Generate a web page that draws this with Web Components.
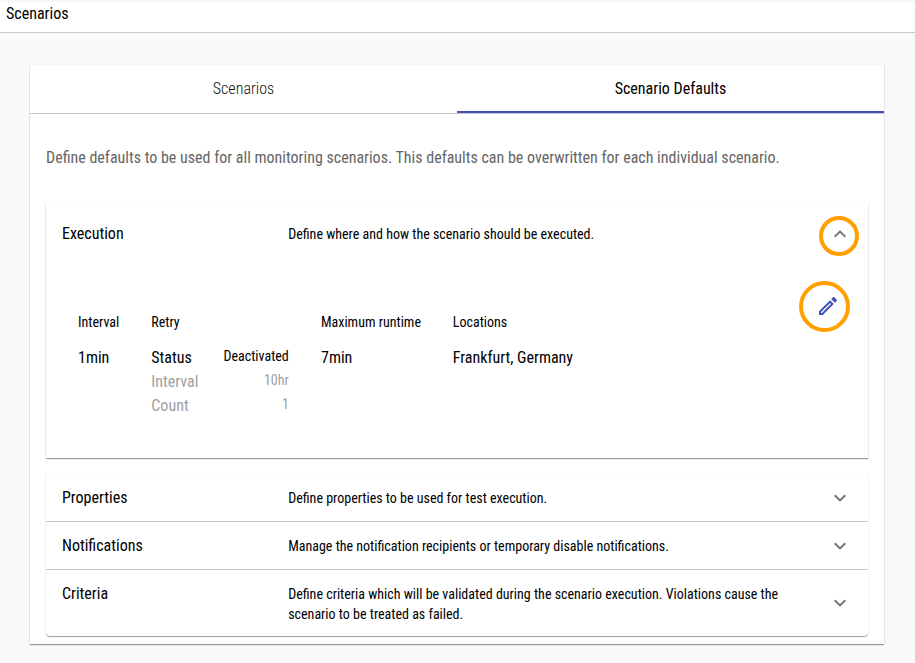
<!DOCTYPE html>
<html lang="en"><head><meta charset="utf-8"><title>Scenarios</title>
<style>
html,body{margin:0;height:100%}
body{background:#fafafa;color:#000;font:400 16px/24px "Roboto Condensed",Roboto,sans-serif;font-stretch:75%;overflow:hidden}
</style></head><body>
<scenario-page></scenario-page>
<script>
const define=(name,html)=>customElements.define(name,class extends HTMLElement{
  constructor(){super();this.attachShadow({mode:'open'}).innerHTML=html;}
});

define('text-line',`<style>
:host{display:block;white-space:nowrap}
</style><slot></slot>`);

define('page-header',`<style>
:host{display:block;box-sizing:border-box;height:33px;padding:2px 6px 0;background:linear-gradient(#f3f3f3,#fff 3px);border-bottom:1px solid #c8c8c8;color:#000}
</style><slot></slot>`);

define('tab-bar',`<style>
:host{display:flex;box-sizing:border-box;height:49px;border-bottom:1px solid #c9c9c9}
</style><slot></slot>`);

define('tab-item',`<style>
:host{flex:1;display:flex;align-items:center;justify-content:center;box-sizing:border-box;padding-top:2px;border-bottom:2px solid transparent;font-weight:300;color:#111}
:host([active]){border-color:#3f51b5;font-weight:400;color:#000}
</style><slot></slot>`);

define('chevron-icon',`<style>
:host{display:block;width:12px;height:8px}
:host([up]){transform:scaleY(-1)}
svg{display:block}
</style><svg width="12" height="8" viewBox="0 0 12 8"><path d="M.7 1.2 6 6.4 11.3 1.2" fill="none" stroke="#757575" stroke-width="2"/></svg>`);

define('highlight-ring',`<style>
:host{position:absolute;box-sizing:border-box;border:4px solid #ffa000;border-radius:50%}
</style>`);

define('expansion-panel',`<style>
:host{display:block;box-sizing:border-box;position:relative;background:#fff;color:#000}
header{display:grid;grid-template-columns:226.2px 1fr 12px;padding:12px 22px 0 16px;height:var(--head,36px)}
.desc{font-size:14px;line-height:20px;padding-top:2px}
.arrow{align-self:start;padding-top:var(--arrow,8px)}
</style><header><div><slot name="title"></slot></div><div class="desc"><slot name="desc"></slot></div>
<div class="arrow"><slot name="arrow"></slot></div></header><slot></slot>`);

define('panel-group',`<style>
:host{display:block;border-radius:0 0 4px 4px;box-shadow:0 1px 1px rgba(0,0,0,.38),0 0 2px rgba(0,0,0,.06);background:#fff}
</style><slot></slot>`);

define('execution-details',`<style>
:host{display:flex;padding:58px 32px 0;color:#000}
section{flex:none}
h4{margin:0 0 14px;font-size:14px;font-weight:400;line-height:20px}
dl{display:grid;grid-template-columns:1fr auto;margin:0}
dt,dd{margin:0;height:24px}
dd{font-size:14px;line-height:20px;box-sizing:border-box;justify-self:end}
.off{color:#a0a0a0}
</style>
<section style="width:73.3px"><h4><text-line>Interval</text-line></h4><text-line>1min</text-line></section>
<section style="width:137.5px;margin-right:32.2px"><h4><text-line>Retry</text-line></h4>
<dl><dt><text-line>Status</text-line></dt><dd><text-line>Deactivated</text-line></dd>
<dt class="off"><text-line>Interval</text-line></dt><dd class="off"><text-line>10hr</text-line></dd>
<dt class="off"><text-line>Count</text-line></dt><dd class="off"><text-line>1</text-line></dd></dl></section>
<section style="width:131.8px"><h4><text-line>Maximum runtime</text-line></h4><text-line>7min</text-line></section>
<section><h4><text-line>Locations</text-line></h4><text-line>Frankfurt, Germany</text-line></section>`);

define('scenario-page',`<style>
:host{display:block}
main{display:block;margin:32px 31px 0 30px;height:579px;background:#fff;box-shadow:0 1px 1px rgba(0,0,0,.4),0 0 2px rgba(0,0,0,.07)}
.content{padding:32px 16px 0}
.intro{color:#666;margin-bottom:32px}
.first{height:256px;margin-bottom:16px;border-radius:0}
.line{border-top:1px solid #c9c9c9}
.pencil{position:absolute;left:770px;top:92px}
</style>
<page-header><text-line>Scenarios</text-line></page-header>
<main><tab-bar><tab-item><text-line>Scenarios</text-line></tab-item><tab-item active><text-line>Scenario Defaults</text-line></tab-item></tab-bar>
<div class="content"><text-line class="intro">Define defaults to be used for all monitoring scenarios. This defaults can be overwritten for each individual scenario.</text-line>
<panel-group class="first"><expansion-panel style="--head:32px;padding-top:8px">
<text-line slot="title">Execution</text-line><text-line slot="desc">Define where and how the scenario should be executed.</text-line><chevron-icon slot="arrow" up></chevron-icon>
<execution-details></execution-details>
<highlight-ring style="left:773px;top:14px;width:40px;height:40px"></highlight-ring>
<highlight-ring style="left:753px;top:79px;width:51px;height:51px"></highlight-ring>
<svg class="pencil" width="24" height="24" viewBox="0 0 24 24"><path fill="#3f51b5" d="m14.06 9.02.92.92L5.92 19H5v-.92l9.06-9.06M17.66 3c-.25 0-.51.1-.7.29l-1.83 1.83 3.75 3.75 1.83-1.83a.996.996 0 0 0 0-1.41l-2.34-2.34c-.2-.2-.45-.29-.71-.29zm-3.6 3.19L3 17.25V21h3.75L17.81 9.94l-3.75-3.75z"/></svg>
</expansion-panel></panel-group>
<panel-group style="height:162px">
<expansion-panel style="height:47px"><text-line slot="title">Properties</text-line><text-line slot="desc">Define properties to be used for test execution.</text-line><chevron-icon slot="arrow"></chevron-icon></expansion-panel>
<expansion-panel class="line" style="height:48px"><text-line slot="title">Notifications</text-line><text-line slot="desc">Manage the notification recipients or temporary disable notifications.</text-line><chevron-icon slot="arrow"></chevron-icon></expansion-panel>
<expansion-panel class="line" style="height:67px;background:none;--head:54px;--arrow:17px"><text-line slot="title">Criteria</text-line><div slot="desc"><text-line>Define criteria which will be validated during the scenario execution. Violations cause the</text-line><text-line>scenario to be treated as failed.</text-line></div><chevron-icon slot="arrow"></chevron-icon></expansion-panel>
</panel-group></div></main>`);
</script></body></html>
